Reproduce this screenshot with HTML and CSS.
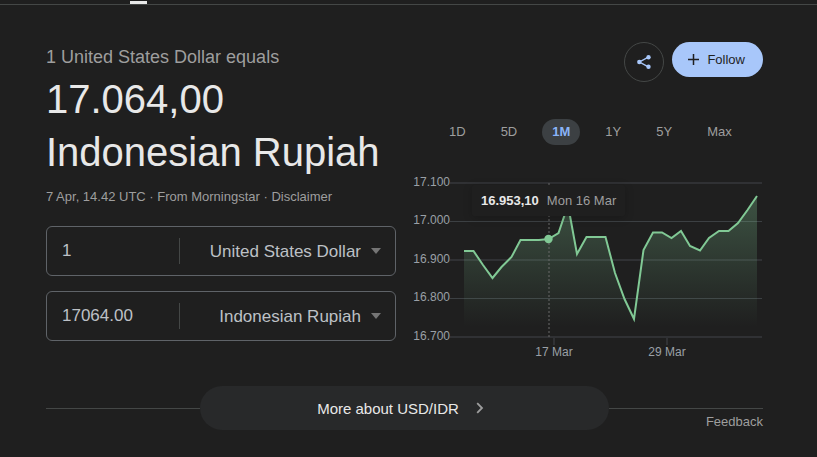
FILE: index.html
```html
<!DOCTYPE html>
<html lang="en">
<head>
    <meta charset="UTF-8">
    <meta name="viewport" content="width=device-width, initial-scale=1.0">
    <title>USD to IDR</title>
    <link rel="stylesheet" href="styles.css">
</head>
<body>
    <div class="tab-strip"><span class="tab-active"></span></div>

    <main class="converter">
        <div class="columns">
            <section class="rate">
                <div class="rate-label">1 United States Dollar equals</div>
                <h1 class="rate-value">17.064,00<br>Indonesian Rupiah</h1>
                <div class="rate-meta">7 Apr, 14.42 UTC · From Morningstar · <a href="#">Disclaimer</a></div>

                <div class="field">
                    <input type="text" id="fromAmount" aria-label="From amount" value="1">
                    <div class="unit">
                        <select id="fromUnit" aria-label="From currency">
                            <option>United States Dollar</option>
                        </select>
                        <svg class="arrow" viewBox="0 0 10 6" width="10" height="6"><path d="M0 0h10L5 6z" /></svg>
                    </div>
                </div>
                <div class="field">
                    <input type="text" id="toAmount" aria-label="To amount" value="17064.00">
                    <div class="unit">
                        <select id="toUnit" aria-label="To currency">
                            <option>Indonesian Rupiah</option>
                        </select>
                        <svg class="arrow" viewBox="0 0 10 6" width="10" height="6"><path d="M0 0h10L5 6z" /></svg>
                    </div>
                </div>
            </section>

            <section class="history">
                <div class="actions">
                    <button class="share" aria-label="Share">
                        <svg viewBox="0 0 14 14" width="14" height="14">
                            <path d="M11.3 2.2L2.5 7l8.8 4.8" fill="none" stroke="#a8c7fa" stroke-width="1.4" />
                            <circle cx="11.5" cy="2.2" r="2.2" fill="#a8c7fa" />
                            <circle cx="2.3" cy="7" r="2.2" fill="#a8c7fa" />
                            <circle cx="11.5" cy="11.8" r="2.2" fill="#a8c7fa" />
                        </svg>
                    </button>
                    <button class="follow">
                        <svg viewBox="0 0 11 11" width="11" height="11"><path d="M5.5 0v11M0 5.5h11" stroke="#1f1f1f" stroke-width="1.5" /></svg>
                        Follow
                    </button>
                </div>

                <div class="ranges">
                    <button>1D</button>
                    <button>5D</button>
                    <button class="selected">1M</button>
                    <button>1Y</button>
                    <button>5Y</button>
                    <button>Max</button>
                </div>

                <div class="chart">
                    <svg viewBox="0 0 350 190">
                        <defs>
                            <linearGradient id="fade" gradientUnits="userSpaceOnUse" x1="0" y1="25" x2="0" y2="155">
                                <stop offset="0" stop-color="#81c995" stop-opacity="0.3" />
                                <stop offset="1" stop-color="#81c995" stop-opacity="0" />
                            </linearGradient>
                        </defs>
                        <g class="grid">
                            <path d="M37 11H349M37 88H349M37 165H349" />
                            <path d="M37 49.5H349M37 126.5H349" class="thin" />
                            <path d="M141 166V173M254 166V173" />
                        </g>
                        <g class="axis">
                            <text x="37" y="14" text-anchor="end">17.100</text>
                            <text x="37" y="52" text-anchor="end">17.000</text>
                            <text x="37" y="91" text-anchor="end">16.900</text>
                            <text x="37" y="129" text-anchor="end">16.800</text>
                            <text x="37" y="168" text-anchor="end">16.700</text>
                            <text x="141" y="184" text-anchor="middle">17 Mar</text>
                            <text x="254" y="184" text-anchor="middle">29 Mar</text>
                        </g>
                        <path fill="url(#fade)" d="M51 79H60.5L70 93L79.5 106L88.5 95L98.5 85L107.5 68H126L135.5 67L145.5 61L155 33L164 82L173.5 65H192.5L202 101L211.5 127L221 147L230.5 78L240 60.5H249L258.5 66L268 59L277 74L287 78.5L296 66L306 59H315.5L325 51L334.5 38L344 24V158H51Z" />
                        <path class="line" d="M51 79H60.5L70 93L79.5 106L88.5 95L98.5 85L107.5 68H126L135.5 67L145.5 61L155 33L164 82L173.5 65H192.5L202 101L211.5 127L221 147L230.5 78L240 60.5H249L258.5 66L268 59L277 74L287 78.5L296 66L306 59H315.5L325 51L334.5 38L344 24" />
                        <path class="cursor" d="M136 11V165" />
                        <circle cx="135.5" cy="67" r="4.2" fill="#81c995" />
                    </svg>
                    <div class="tooltip"><b>16.953,10</b><span>Mon 16 Mar</span></div>
                </div>
            </section>
        </div>

        <div class="more-row">
            <button class="more">
                More about USD/IDR
                <svg viewBox="0 0 8 12" width="8" height="12"><path d="M1.2 1.2L6 6l-4.800 4.800" fill="none" stroke="#9e9e9e" stroke-width="1.800" /></svg>
            </button>
        </div>
        <a class="feedback" href="#">Feedback</a>
    </main>
</body>
</html>
```

FILE: styles.css
```css
* {
    box-sizing: border-box;
}
body {
    margin: 0;
    background-color: #1f1f1f;
    color: #9e9e9e;
    font-family: "Liberation Sans", Arial, sans-serif;
    font-size: 13px;
}
button, input, select {
    font: inherit;
    color: inherit;
    background: none;
    border: none;
    margin: 0;
    padding: 0;
}
button, select {
    cursor: pointer;
}
a {
    color: inherit;
    text-decoration: none;
}
.tab-strip {
    height: 5px;
    padding: 1px 0 0 130px;
    border-bottom: 1px solid #444746;
}
.tab-active {
    display: block;
    width: 17px;
    height: 3px;
    background-color: #e8e8e8;
}
.converter {
    padding: 37px 54px 0 46px;
}
.columns {
    display: grid;
    grid-template-columns: 1fr 1fr;
    gap: 17px;
}
.rate-label {
    padding-top: 3px;
    font-size: 18px;
    line-height: 24px;
    white-space: nowrap;
}
.rate-value {
    margin: 4px 0 0;
    color: #e8e8e8;
    font-size: 40px;
    font-weight: normal;
    line-height: 53px;
    white-space: nowrap;
}
.rate-meta {
    margin: 10px 0 21px;
    line-height: 16px;
}
.field {
    display: flex;
    align-items: center;
    height: 50px;
    margin-bottom: 15px;
    border: 1px solid #5f6368;
    border-radius: 6px;
    color: #bdc1c6;
    font-size: 17px;
}
.field input {
    width: 38%;
    padding-left: 15px;
}
.unit {
    flex: 1;
    position: relative;
    border-left: 1px solid #444746;
}
.unit select {
    display: block;
    width: 100%;
    height: 26px;
    padding-right: 34px;
    appearance: none;
    text-align-last: right;
}
.arrow {
    position: absolute;
    right: 14px;
    top: 10px;
    fill: #757575;
    pointer-events: none;
}
.actions {
    display: flex;
    justify-content: flex-end;
    align-items: flex-start;
    gap: 8px;
}
.share {
    display: flex;
    align-items: center;
    justify-content: center;
    width: 40px;
    height: 40px;
    border: 1px solid #444746;
    border-radius: 50%;
}
.follow {
    display: flex;
    align-items: center;
    gap: 8px;
    height: 35px;
    padding: 0 18px 0 16px;
    border-radius: 18px;
    background-color: #a8c7fa;
    color: #1f1f1f;
}
.ranges {
    display: flex;
    gap: 15px;
    margin-top: 37px;
    padding-left: 26px;
}
.ranges button {
    height: 26px;
    padding: 0 10px 1px;
    border-radius: 13px;
}
.ranges .selected {
    background-color: #3c4043;
    color: #8ab4f8;
    font-weight: bold;
}
.chart {
    position: relative;
    margin-top: 27px;
}
.chart svg {
    display: block;
    width: 100%;
}
.grid path {
    stroke: #303134;
    stroke-width: 2;
}
.grid .thin {
    stroke: #3c4043;
    stroke-width: 1;
}
.axis text {
    fill: #9aa0a6;
    font-size: 12px;
}
.line {
    fill: none;
    stroke: #81c995;
    stroke-width: 2;
}
.cursor {
    stroke: #6b6b6b;
    stroke-width: 1;
    stroke-dasharray: 2 2;
}
.tooltip {
    position: absolute;
    left: 59px;
    top: 13px;
    display: flex;
    gap: 8px;
    padding: 0 9px;
    line-height: 31px;
    border-radius: 2px;
    background-color: #1f1f1f;
    box-shadow: 0 2px 10px rgba(0, 0, 0, 0.2);
    white-space: nowrap;
}
.tooltip b {
    color: #e8e8e8;
}
.more-row {
    display: flex;
    align-items: center;
    margin-top: 24px;
}
.more-row::before,
.more-row::after {
    content: "";
    flex: 1;
    height: 1px;
    background-color: #444746;
}
.more {
    display: flex;
    align-items: center;
    justify-content: center;
    gap: 17px;
    width: 57%;
    height: 44px;
    padding-right: 8px;
    border-radius: 22px;
    background-color: #28292a;
    color: #e8e8e8;
    font-size: 15px;
}
.feedback {
    display: block;
    width: fit-content;
    margin: -16px 0 0 auto;
    line-height: 16px;
}
```
